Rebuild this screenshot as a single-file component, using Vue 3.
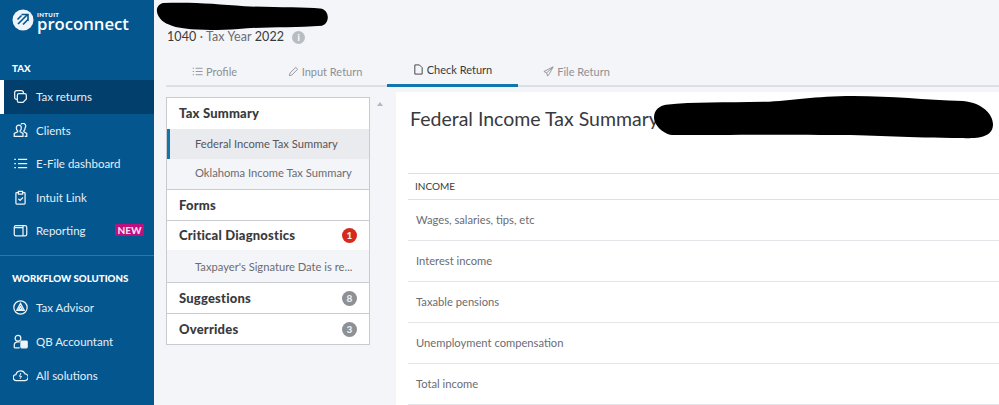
<script setup>
const panel = [
  { t: 'Tax Summary', kids: [{ t: 'Federal Income Tax Summary', active: true }, { t: 'Oklahoma Income Tax Summary' }] },
  { t: 'Forms' },
  { t: 'Critical Diagnostics', badge: '1', red: true, kids: [{ t: "Taxpayer's Signature Date is re...", diag: true }] },
  { t: 'Suggestions', badge: '8' },
  { t: 'Overrides', badge: '3' },
]
const rows = ['Wages, salaries, tips, etc', 'Interest income', 'Taxable pensions', 'Unemployment compensation', 'Total income']
</script>

<template>
  <div class="page">
    <aside class="side">
      <div class="logo">
        <svg width="22" height="22" viewBox="0 0 22 22"><circle cx="11" cy="11" r="10.5" fill="#eef4f8"/><path d="M6 15 15.500 5.500M9.500 5.500h6.500V12M5.500 10.500 9.500 6.500M11 15.500l5-5" fill="none" stroke="#04578f" stroke-width="1.600"/></svg>
        <div class="logotext"><span class="intuit">INTUIT</span><span class="pc">proconnect</span></div>
      </div>
      <div class="sec">TAX</div>
      <div class="item active">
        <svg viewBox="0 0 18 18" class="ic"><path d="M5 12.500H4.200A2.200 2.200 0 0 1 2 10.300V4.200A2.200 2.200 0 0 1 4.200 2h6.100A2.200 2.200 0 0 1 12.500 4.200V5"/><path d="M7.200 5.500H14a2 2 0 0 1 2 2V12l-4 4H7.200a2 2 0 0 1-2-2V7.500a2 2 0 0 1 2-2Z"/></svg>
        <span>Tax returns</span>
      </div>
      <div class="item">
        <svg viewBox="0 0 18 18" class="ic"><path d="M4 6a3 3.500 0 1 1 6 0c0 1.600-.7 2.700-1.500 3.300v1.200l3.500 2V16H1.500v-3.500L5.500 10.500V9.300C4.700 8.700 4 7.600 4 6Z"/><path d="M9.500 1.800A3 3.500 0 0 1 14.500 6c0 1.600-.7 2.700-1.500 3.300v1.200l3.500 2V16H14"/></svg>
        <span>Clients</span>
      </div>
      <div class="item">
        <svg viewBox="0 0 18 18" class="ic"><path d="M6 4h11M6 9h11M6 14h11M1.500 4h2M1.500 9h2M1.500 14h2"/></svg>
        <span>E-File dashboard</span>
      </div>
      <div class="item">
        <svg viewBox="0 0 18 18" class="ic"><path d="M6 3H4.500A1 1 0 0 0 3.500 4v12a1 1 0 0 0 1 1h9a1 1 0 0 0 1-1V4a1 1 0 0 0-1-1H12"/><path d="M6.500 1.500h5V5h-5Z"/><path d="m6.500 10.500 2 2 3.500-3.500"/></svg>
        <span>Intuit Link</span>
      </div>
      <div class="item">
        <svg viewBox="0 0 18 18" class="ic"><rect x="1.500" y="3" width="15" height="12.500" rx="2"/><path d="M12 3v12.500M1.500 5.500H12"/></svg>
        <span>Reporting</span>
        <b class="new">NEW</b>
      </div>
      <div class="divider"></div>
      <div class="sec wf">WORKFLOW SOLUTIONS</div>
      <div class="item">
        <svg viewBox="0 0 18 18" class="ic"><circle cx="9" cy="9" r="8"/><path d="M9 4 4.500 12.500h9ZM9 8l-2 3.500h4Z"/></svg>
        <span>Tax Advisor</span>
      </div>
      <div class="item wfi">
        <svg viewBox="0 0 18 18" class="ic"><circle cx="6" cy="5" r="3.400"/><path d="M1.500 16.500v-3c0-2 1.500-4 4.500-4 1 0 1.500.2 2 .4M1.500 16.500H8"/><rect x="9.500" y="8.500" width="7.500" height="8" rx=".8" fill="#eef4f8"/></svg>
        <span>QB Accountant</span>
      </div>
      <div class="item wfi">
        <svg viewBox="0 0 18 18" class="ic"><path d="M5 15H4a3.500 3.500 0 0 1-.5-7A5.800 5.800 0 0 1 14.500 7a4 4 0 0 1-.5 8Z"/><path d="M9.500 6 7.800 10h2.400l-1.700 3" stroke-width="1.200"/></svg>
        <span>All solutions</span>
      </div>
    </aside>

    <main class="main">
      <header class="head">
        <svg class="blob b1" viewBox="0 0 176 26" preserveAspectRatio="none"><path d="M8 1C40 0 62 2 90 4c30 1 60 1 76 2 10 1 10 14 2 16-30 2-60 1-84 3-30 2-60 1-70-4C2 17-3 4 8 1Z" fill="#000"/></svg>
        <div class="sub"><span class="dk">1040</span> · Tax Year <span class="dk">2022</span><i class="info">i</i></div>
      </header>

      <nav class="tabs">
        <div class="tab t1">
          <svg viewBox="0 0 12 12" class="tic"><path d="M4 2.500h7.500M4 6h7.500M4 9.500h7.500M.8 2.500h1.400M.8 6h1.400M.8 9.500h1.400"/></svg>Profile
        </div>
        <div class="tab t2">
          <svg viewBox="0 0 12 12" class="tic"><path d="m1.500 10.500.6-2.700L8.500 1.500l2 2-6.300 6.400Z"/></svg>Input Return
        </div>
        <div class="tab t3 on">
          <svg viewBox="0 0 12 12" class="tic"><path d="M2 1h5l3 3v7H2Z"/></svg>Check Return
        </div>
        <div class="tab t4">
          <svg viewBox="0 0 12 12" class="tic"><path d="M11 1 1 6l3 1.500L5 11l2-2.500ZM11 1 4 7.500"/></svg>File Return
        </div>
      </nav>

      <div class="body">
        <div class="panel">
          <template v-for="g in panel" :key="g.t">
            <div class="ghead">
              <span>{{ g.t }}</span>
              <b v-if="g.badge" class="badge" :class="{ red: g.red }">{{ g.badge }}</b>
            </div>
            <div v-for="k in g.kids" :key="k.t" class="kid" :class="{ cur: k.active, diag: k.diag }">{{ k.t }}</div>
          </template>
        </div>
        <div class="scroll"><i class="arrow"></i></div>
        <section class="content">
          <h1 class="title">Federal Income Tax Summary</h1>
          <svg class="blob b2" viewBox="0 0 340 44" preserveAspectRatio="none"><path d="M12 9C40 6 70 7 110 6c30-1 50-6 90-6 40 0 70 4 110 5 20 2 30 14 30 24 0 12-12 15-30 14-60 0-80-3-130-3-50-1-110 0-160 0C10 40 0 30 0 22 0 14 6 10 12 9Z" fill="#000"/></svg>
          <div class="table">
            <div class="th">INCOME</div>
            <div v-for="r in rows" :key="r" class="tr">{{ r }}</div>
          </div>
        </section>
      </div>
    </main>
  </div>
</template>

<style>
html, body { margin: 0; height: 100%; overflow: hidden; }
</style>

<style scoped>
.page { display: flex; width: 999px; height: 405px; overflow: hidden; font-family: "Lato", "Noto Sans", sans-serif; background: #f4f5f8; color: #393a3d; }
.side { width: 154px; flex: none; background: #04568f; color: #e6eff5; }
.logo { display: flex; align-items: flex-start; gap: 3px; padding: 9px 0 0 12px; height: 40px; box-sizing: border-box; }
.logotext { display: flex; flex-direction: column; padding-top: 3px; }
.intuit { font-size: 6px; font-weight: 900; line-height: 6px; letter-spacing: .4px; color: #fff; }
.pc { font-family: "Open Sans", sans-serif; font-size: 16.700px; line-height: 12px; font-weight: 600; color: #fff; }
.sec { font-size: 9.700px; font-weight: 900; color: #fff; padding: 22px 0 0 12px; line-height: 12px; height: 40px; box-sizing: border-box; }
.sec.wf { padding-top: 16px; height: 34.500px; }
.item { display: flex; align-items: center; height: 33.500px; padding-left: 13px; font-size: 11.500px; position: relative; box-sizing: border-box; }
.item.wfi { height: 34px; }
.item span { margin-left: 8px; }
.item.active { background: #033f6d; border-left: 4px solid #fff; padding-left: 9px; }
.ic { width: 15px; height: 15px; fill: none; stroke: #eef4f8; stroke-width: 1.500; flex: none; }
.new { position: absolute; right: 10px; top: 9.500px; background: #bd0f7e; color: #f7dcee; font-size: 10px; font-weight: 900; line-height: 12px; padding: 0 2.500px; border-radius: 1px; }
.divider { height: 1px; background: #2f76a6; margin-top: 7.500px; }

.main { flex: 1; min-width: 0; display: flex; flex-direction: column; }
.head { height: 54px; position: relative; box-sizing: border-box; flex: none; }
.sub { position: absolute; left: 13px; top: 28px; font-size: 12.500px; line-height: 18px; letter-spacing: .1px; color: #6b6c72; display: flex; align-items: center; white-space: pre; }
.dk { color: #393a3d; }
.info { display: inline-block; width: 13px; height: 13px; border-radius: 50%; background: #b9bdc1; color: #fff; font-size: 9px; line-height: 13px; text-align: center; font-style: normal; font-weight: 900; margin-left: 8px; }
.blob { position: absolute; }
.b1 { left: 1px; top: 2px; width: 175px; height: 28px; }
.tabs { flex: none; height: 31px; margin-left: 12px; display: flex; border-bottom: 2px solid #dcdfe3; font-size: 11px; color: #8d9096; }
.tab { display: flex; align-items: center; justify-content: center; gap: 3px; height: 31px; box-sizing: border-box; padding-top: 3px; flex: none; }
.t1 { width: 97px; }
.t2 { width: 124px; }
.t3 { width: 131px; }
.t4 { width: 117px; }
.tab.on { color: #393a3d; height: 33px; padding-top: 3px; padding-bottom: 2px; border-bottom: 3px solid #0f77ad; }
.tic { width: 11px; height: 11px; fill: none; stroke: currentColor; stroke-width: 1; flex: none; }
.body { flex: 1; display: flex; min-height: 0; }
.panel { width: 204px; height: 248px; margin: 10px 0 0 12px; background: #fff; border: 1px solid #c8ccd0; box-sizing: border-box; flex: none; }
.ghead { display: flex; align-items: center; justify-content: space-between; height: 30.800px; padding: 0 12px 0 12px; font-size: 13px; font-weight: 900; letter-spacing: .2px; color: #393a3d; border-top: 1px solid #c8ccd0; box-sizing: border-box; }
.ghead:first-child { border-top: 0; }
.badge { width: 15px; height: 15px; line-height: 15px; border-radius: 50%; background: #8d9096; color: #eee; text-align: center; font-size: 10px; font-weight: 900; letter-spacing: 0; }
.badge.red { background: #d52b1e; }
.kid { height: 29.500px; line-height: 28px; background: #f4f5f8; font-size: 11.200px; color: #6b6c72; padding-left: 28px; box-sizing: border-box; white-space: nowrap; }
.kid.diag { height: 32px; line-height: 34px; }
.kid.cur { height: 30.500px; line-height: 29px; background: #e9ebef; color: #55565b; box-shadow: inset 3px 0 0 #0f77ad; }
.scroll { width: 26px; flex: none; padding: 15px 0 0 7px; box-sizing: border-box; }
.arrow { display: block; width: 0; height: 0; border: 3.500px solid transparent; border-bottom: 4px solid #b5b8bd; border-top: 0; }
.content { flex: 1; background: #fff; margin-top: 5px; padding: 0 0 0 12px; position: relative; min-width: 0; }
.title { margin: 0; padding: 14px 0 0 2px; font-size: 19.500px; line-height: 26px; font-weight: 400; color: #393a3d; white-space: nowrap; }
.b2 { left: 258px; top: 4px; width: 339px; height: 43px; }
.table { margin-top: 41px; border-top: 1px solid #dcdfe3; }
.th { height: 26px; line-height: 25px; font-size: 10px; color: #393a3d; padding-left: 7px; border-bottom: 1px solid #dcdfe3; box-sizing: border-box; }
.tr { height: 41px; line-height: 40px; font-size: 11.200px; color: #6b6c72; padding-left: 8px; border-bottom: 1px solid #e3e5e8; box-sizing: border-box; }
</style>
